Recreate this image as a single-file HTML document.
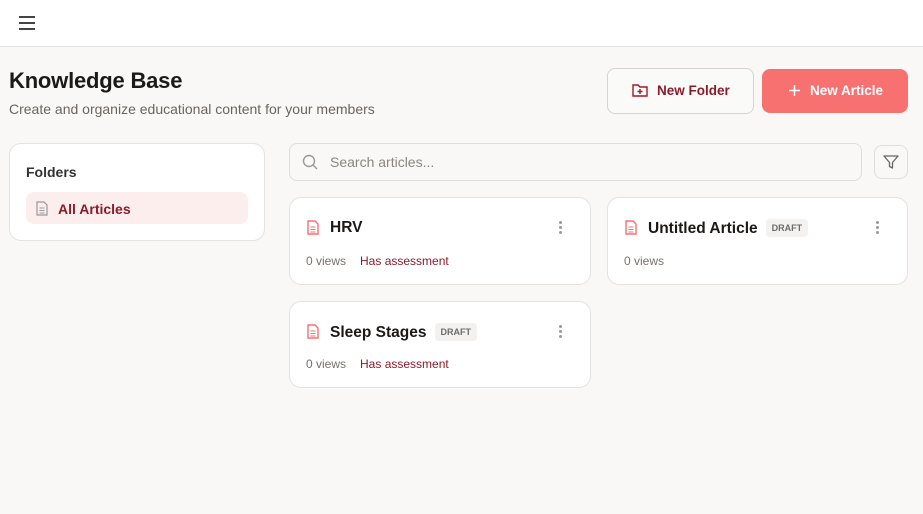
<!DOCTYPE html><html><head><style>
*{box-sizing:border-box;margin:0;padding:0}
body{width:923px;height:514px;background:#f9f8f6;font-family:"Liberation Sans",sans-serif;position:relative;overflow:hidden;color:#1c1917}
.hdr{position:absolute;left:0;top:0;width:923px;height:47px;background:#fff;border-bottom:1px solid #e5e3df}
.abs{position:absolute}
.card{position:absolute;background:#fff;border:1px solid #e5e3df;border-radius:12px}
.t{font-size:15.5px;font-weight:bold;color:#1c1917}
.meta{position:absolute;top:56px;left:16px;font-size:12px;color:#78716c}
.meta span{color:#8b1a2b;margin-left:14px}
.dots{position:absolute;top:23px;width:4px}
.dots i{display:block;width:3px;height:3px;border-radius:50%;background:#999;margin-bottom:2px}
.draft{display:inline-block;font-size:9px;font-weight:bold;color:#6b6b6b;background:#f3f2f0;border-radius:4px;padding:4px 6px;margin-left:8px;vertical-align:2px}
</style></head><body>
<div class="hdr"><svg class="abs" style="left:18px;top:15px" width="18" height="16" viewBox="0 0 18 16"><path d="M1 2h16M1 8h16M1 14h16" stroke="#444" stroke-width="2"/></svg></div>
<div class="abs" style="left:9px;top:68px;font-size:22px;font-weight:bold;letter-spacing:-0.2px">Knowledge Base</div>
<div class="abs" style="left:9px;top:101px;font-size:14px;color:#6b6560">Create and organize educational content for your members</div>
<div class="abs" style="left:607px;top:68px;width:147px;height:46px;border:1px solid #d6d3d1;border-radius:8px;background:#fafaf9;color:#8b1a2b;font-size:13.5px;font-weight:bold;line-height:44px;padding-left:49px">New Folder</div>
<svg class="abs" style="left:632px;top:83px" width="16" height="14" viewBox="0 0 16 14"><path d="M1 2h5l2 2h7v9H1z" fill="none" stroke="#a0192e" stroke-width="1.4"/><path d="M8 6v5M5.5 8.5h5" stroke="#a0192e" stroke-width="1.4"/></svg>
<div class="abs" style="left:762px;top:69px;width:146px;height:44px;border-radius:8px;background:#f87171;color:#fff;font-size:13.5px;font-weight:bold;line-height:44px;padding-left:48px">New Article</div>
<svg class="abs" style="left:788px;top:84px" width="13" height="13"><path d="M6.5 1v11M1 6.5h11" stroke="#fff" stroke-width="1.5"/></svg>
<div class="card" style="left:9px;top:143px;width:256px;height:98px">
<div class="abs" style="left:16px;top:20px;font-size:14px;font-weight:bold;color:#333">Folders</div>
<div class="abs" style="left:16px;top:48px;width:222px;height:32px;background:#fdeeee;border-radius:8px"></div>
<svg class="abs" style="left:26px;top:57px" width="12" height="15" viewBox="0 0 12 15"><path d="M1 1h7l3 3v10H1z" fill="none" stroke="#999" stroke-width="1.2"/><path d="M3.5 7h5M3.5 9.5h5M3.5 12h5" stroke="#999"/></svg>
<div class="abs" style="left:48px;top:57px;font-size:14px;color:#8b1a2b;font-weight:bold">All Articles</div>
</div>
<div class="abs" style="left:289px;top:143px;width:573px;height:38px;border:1px solid #e0ddd9;border-radius:8px;background:#f9f8f6"></div>
<svg class="abs" style="left:302px;top:154px" width="16" height="16" viewBox="0 0 16 16"><circle cx="7" cy="7" r="5.5" fill="none" stroke="#999" stroke-width="1.4"/><path d="M11 11l4 4" stroke="#999" stroke-width="1.4"/></svg>
<div class="abs" style="left:330px;top:154px;font-size:14px;color:#8a8580">Search articles...</div>
<div class="abs" style="left:874px;top:145px;width:34px;height:34px;border:1px solid #e0ddd9;border-radius:8px;background:#f9f8f6"></div>
<svg class="abs" style="left:883px;top:154px" width="16" height="16" viewBox="0 0 16 16"><path d="M1 2h14l-5.5 6.5V14l-3-1.5V8.5z" fill="none" stroke="#666" stroke-width="1.3" stroke-linejoin="round"/></svg>

<div class="card" style="left:289px;top:197px;width:302px;height:88px">
<svg class="abs" style="left:17px;top:22px" width="12" height="15" viewBox="0 0 12 15"><path d="M1 1h7l3 3v10H1z" fill="none" stroke="#f87171" stroke-width="1.4"/><path d="M3.5 7h5M3.5 9.5h5M3.5 12h5" stroke="#f87171"/></svg>
<div class="abs t" style="left:40px;top:21px">HRV</div>
<div class="dots" style="left:269px"><i></i><i></i><i></i></div>
<div class="meta">0 views<span>Has assessment</span></div></div>

<div class="card" style="left:607px;top:197px;width:301px;height:88px">
<svg class="abs" style="left:17px;top:22px" width="12" height="15" viewBox="0 0 12 15"><path d="M1 1h7l3 3v10H1z" fill="none" stroke="#f87171" stroke-width="1.4"/><path d="M3.5 7h5M3.5 9.5h5M3.5 12h5" stroke="#f87171"/></svg>
<div class="abs t" style="left:40px;top:21px">Untitled Article<span class="draft">DRAFT</span></div>
<div class="dots" style="left:268px"><i></i><i></i><i></i></div>
<div class="meta">0 views</div></div>

<div class="card" style="left:289px;top:301px;width:302px;height:87px">
<svg class="abs" style="left:17px;top:22px" width="12" height="15" viewBox="0 0 12 15"><path d="M1 1h7l3 3v10H1z" fill="none" stroke="#f87171" stroke-width="1.4"/><path d="M3.5 7h5M3.5 9.5h5M3.5 12h5" stroke="#f87171"/></svg>
<div class="abs t" style="left:40px;top:21px">Sleep Stages<span class="draft">DRAFT</span></div>
<div class="dots" style="left:269px"><i></i><i></i><i></i></div>
<div class="meta" style="top:55px">0 views<span>Has assessment</span></div></div>
</body></html>
